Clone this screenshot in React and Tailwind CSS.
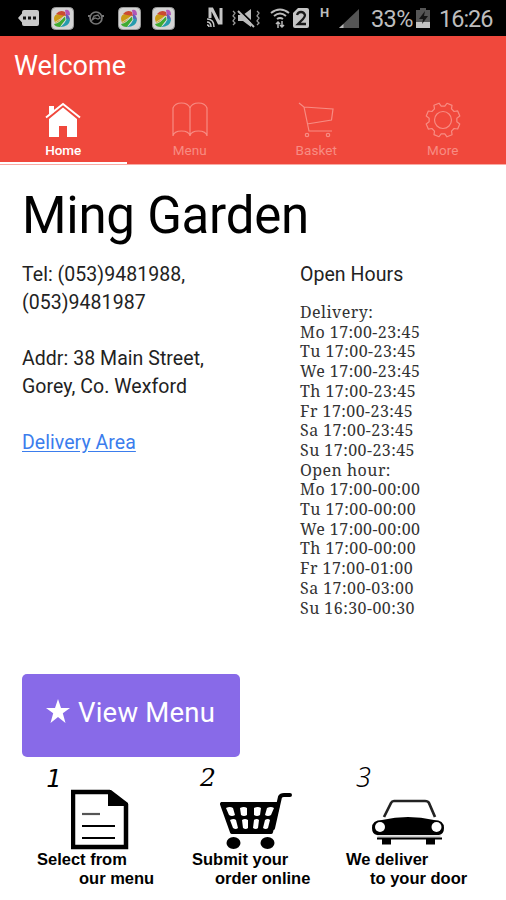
import React from 'react';

const hours = [
  'Delivery:', 'Mo 17:00-23:45', 'Tu 17:00-23:45', 'We 17:00-23:45', 'Th 17:00-23:45',
  'Fr 17:00-23:45', 'Sa 17:00-23:45', 'Su 17:00-23:45', 'Open hour:', 'Mo 17:00-00:00',
  'Tu 17:00-00:00', 'We 17:00-00:00', 'Th 17:00-00:00', 'Fr 17:00-01:00', 'Sa 17:00-03:00',
  'Su 16:30-00:30',
];

function MessageIcon() {
  return (
    <svg className="ml-[18px] h-[16px] w-[21px]" viewBox="0 0 21 16">
      <path d="M0 8 4 3.500V2Q4 0 6 0h13q2 0 2 2v12q0 2-2 2H6q-2 0-2-2v-1.500Z" fill="#c9c9c9" />
      <path d="M5 6.500h3v3H5zM10 6.500h3v3h-3zM15 6.500h3v3h-3z" fill="#111" />
    </svg>
  );
}

function GalleryIcon({ className }) {
  return (
    <svg className={`h-[23px] w-[23px] ${className}`} viewBox="0 0 23 23">
      <rect x=".5" y=".5" width="22" height="22" rx="4" fill="#d4d4d4" stroke="#999" />
      <path d="M3 12q0-5 5-5l6 1-7 7-3 1Z" fill="#ca9b16" />
      <path d="M5 7q4-5 9-2l1 4-6-1Z" fill="#cb4a33" />
      <path d="M14 3q5-1 5 5l-4 1Z" fill="#b155b6" />
      <path d="M15 7q4 2 4 6l-4-1Z" fill="#5a62ba" />
      <path d="M3 17q6-1 11-8l1 3-6 8q-5 0-6-3Z" fill="#3fab30" />
      <path d="M9 20q6-4 6-9l4 2q-1 7-10 7Z" fill="#259bad" />
      <path d="m3 16 11-7M14 9l1 4-5 6" stroke="#ddd" strokeWidth=".7" fill="none" />
    </svg>
  );
}

function StatusBar() {
  return (
    <div className="flex h-9 items-center overflow-hidden bg-black text-[#bdbdbd]">
      <MessageIcon />
      <GalleryIcon className="ml-[12px]" />
      <svg className="ml-[14px] h-[16px] w-[16px]" viewBox="0 0 16 16" fill="none" stroke="#757575">
        <circle cx="8" cy="8" r="6" strokeWidth="1.700" />
        <path d="m4 10 2-4 4-1 2 3-2 1-3-1Z" strokeWidth="1.300" />
        <path d="M0 6h2M14 6h2" strokeWidth="2" />
      </svg>
      <GalleryIcon className="ml-[14px]" />
      <GalleryIcon className="ml-[11px]" />
      <svg className="ml-[31px] h-[22px] w-[18px]" viewBox="0 0 18 22" fill="none" stroke="#c5c5c5">
        <path d="M4 11V2h2l7 14h2V1" strokeWidth="3" />
        <path d="M1 12q7 0 7 8M1 15q4 0 4 5M1 18q2 0 2 2" strokeWidth="1.500" />
      </svg>
      <svg className="ml-[8px] h-[20px] w-[28px]" viewBox="0 0 28 20">
        <path d="M6 7h5l8-6v18l-8-6H6Z" fill="#bbb" />
        <path d="m7 2 17 16" stroke="#000" strokeWidth="2" />
        <path d="m6 3 16 16" stroke="#bbb" strokeWidth="2" />
        <path d="m1 3 2 2-2 3 2 2-2 3 2 2-2 2M25 3l2 2-2 3 2 2-2 3 2 2-2 2" fill="none" stroke="#999" strokeWidth="1.300" />
      </svg>
      <svg className="ml-[10px] h-[21px] w-[20px]" viewBox="0 0 20 21" fill="none" stroke="#bbb">
        <path d="M1 5q9-7 18 0M4 8q6-5 12 0M7 11q3-2 6 0" strokeWidth="2" />
        <path d="M8 20v-6M6 16l2-2 2 2M12 13v6M10 17l2 2 2-2" strokeWidth="1.500" />
      </svg>
      <svg className="ml-[3px] h-[20px] w-[16px]" viewBox="0 0 16 20">
        <path d="M5 0h9q2 0 2 2v16q0 2-2 2H2q-2 0-2-2V5Z" fill="#c5c5c5" />
        <path d="M4 7q1-3 4-3t4 3q0 2-2 4l-5 5h8" fill="none" stroke="#181818" strokeWidth="2.300" />
      </svg>
      <span className="mb-[11px] ml-[11px] w-[10px] font-['Roboto',sans-serif] text-[13px] leading-[12px] font-bold">H</span>
      <svg className="ml-[9px] h-[19px] w-[20px]" viewBox="0 0 20 19">
        <path d="M20 0v19H0Z" fill="#555" />
        <path d="M4.500 15v4H0Z" fill="#bbb" />
      </svg>
      <span className="mt-[3px] ml-[12px] w-[42px] font-['Roboto',sans-serif] text-[23.500px] tracking-[-0.600px] whitespace-nowrap">33%</span>
      <svg className="ml-[3px] h-[20px] w-[14px]" viewBox="0 0 14 20">
        <path d="M4 0h6v2h4v18H0V2h4Z" fill="#555" />
        <path d="M0 14h14v6H0Z" fill="#c3c3c3" />
        <path d="m9 3-6 8h4l-1 5 6-8H8Z" fill="#151515" />
      </svg>
      <span className="mt-[3px] ml-[9px] font-['Roboto',sans-serif] text-[23.500px] tracking-[-1px]">16:26</span>
    </div>
  );
}

const tabIcons = {
  Home: (
    <g>
      <path d="M4 4h5v6l-5 4Z" fill="currentColor" stroke="none" />
      <path d="M1 15.500 18 2l17 13.500" strokeWidth="2" />
      <path d="M4 17 18 5.500 32 17v18H22V24h-8v11H4Z" fill="currentColor" stroke="none" />
    </g>
  ),
  Menu: <path d="M18 6v28M18 6Q16 1 9.500 1T1 6v28q1-5 8.500-5T18 34q1-5 8.500-5T35 34V6q-2-5-8.500-5T18 6Z" />,
  Basket: (
    <g>
      <path d="m1 1 5 4 5 24h23M6 5l29 2-1.500 11L9 22" />
      <circle cx="9" cy="33" r="1.700" />
      <circle cx="30" cy="33" r="1.700" />
    </g>
  ),
  More: (
    <g>
      <circle cx="18" cy="18" r="8.500" />
      <path transform="rotate(22.500 18 18)" d="M14.400 4.500 15.300 1h5.400l.9 3.500 3.400 1.400L28.100 4 32 7.900 30.100 11l1.400 3.400 3.500.9v5.400l-3.500.9-1.400 3.400 1.900 3.100-3.900 3.900-3.100-1.900-3.400 1.400-.9 3.500h-5.400l-.9-3.500L11 30.100 7.900 32 4 28.100 5.900 25l-1.400-3.400-3.500-.9v-5.400l3.500-.9L5.900 11 4 7.900 7.900 4 11 5.900Z" strokeLinejoin="round" />
    </g>
  ),
};

function Tab({ name, active }) {
  return (
    <div className={`flex flex-1 flex-col items-center border-b-2 pt-[6px] ${active ? 'border-white text-white' : 'border-[#f0483c] text-[#f78c83]'}`}>
      <svg className="h-[36px] w-[36px]" viewBox="0 0 36 36" fill="none" stroke="currentColor" strokeWidth="1.200">
        {tabIcons[name]}
      </svg>
      <span className={`mt-[3px] text-[13.500px] leading-[18px] ${active ? 'font-medium' : 'tracking-[0.100px]'}`}>{name}</span>
    </div>
  );
}

function DocumentIcon() {
  return (
    <svg className="mt-[29px] ml-[34px] h-[61px] w-[59px]" viewBox="0 0 59 61">
      <path d="M2 3h36l17 13v42H2Z" fill="#fff" stroke="#000" strokeWidth="4.500" />
      <path d="M37 1h3l17 13v3H37Z" />
      <path d="M11 25h18" stroke="#555" strokeWidth="2.200" />
      <path d="M11 37h33M11 49h33" stroke="#000" strokeWidth="2.200" />
    </svg>
  );
}

function CartIcon() {
  return (
    <svg className="mt-[32px] ml-[26px] h-[58px] w-[76px]" viewBox="0 0 76 58">
      <path d="M4 12h56L53 40H14Z" stroke="#000" strokeWidth="4" strokeLinejoin="round" />
      <path d="m55 36 7-31q1-2 4-2h6" fill="none" stroke="#000" strokeWidth="4" strokeLinecap="round" />
      <g fill="#fff">
        <path d="M8 16q4-2 7 0l2 7q-3 2-6 0ZM22 16q4-2 7 0v7q-3 2-6 0ZM36 16q4-2 7 0l-1 7q-3 2-6 0ZM49 16q4-2 7 0l-3 7q-3 2-6 0Z" />
        <path d="M12 28q4-2 6 0l2 8q-2 2-5 0ZM24 28q3-2 6 0v8q-2 2-5 0ZM36 28q3-2 5 0l-1 8q-2 2-5 0ZM47 28q3-2 5 0l-2 8q-2 2-5 0Z" />
      </g>
      <ellipse cx="15.500" cy="51" rx="7" ry="6" />
      <ellipse cx="49.500" cy="51" rx="7" ry="6" />
    </svg>
  );
}

function CarIcon() {
  return (
    <svg className="mt-[38px] ml-[25px] h-[52px] w-[74px]" viewBox="0 0 74 52">
      <path d="m13 19 7-14q1-2 3-2h31q3 0 4 2l6 14" fill="none" stroke="#222" strokeWidth="2.700" />
      <path d="M11 22q26-6 52 0 10 0 10 8 0 6-5 7H6q-5-1-5-7 0-8 10-8Z" />
      <circle cx="9" cy="29" r="5" fill="#fff" />
      <circle cx="65.500" cy="29" r="5" fill="#fff" />
      <path d="M6 37.500h64l-1 2H7Z" fill="#ccc" />
      <path d="M6 39.500h65v2H6ZM11 41h9v5.500H11ZM55 41h9v5.500H55Z" />
    </svg>
  );
}

function Step({ number, icon, first, second, className, numberClass, secondClass }) {
  return (
    <div className={`relative flex shrink-0 flex-col ${className}`}>
      <span className={`absolute leading-[36px] italic ${numberClass}`}>{number}</span>
      {icon}
      <div className="font-['Liberation_Sans',Arial,sans-serif] text-[16.500px] leading-[19px] font-bold whitespace-nowrap">
        <p>{first}</p>
        <p className={secondClass}>{second}</p>
      </div>
    </div>
  );
}

export default function App() {
  return (
    <div className="flex h-[900px] w-[506px] flex-col overflow-hidden bg-white font-['Roboto',sans-serif] text-black">
      <StatusBar />
      <header className="flex h-[129px] flex-col border-b border-[#f9aaa4] bg-[#f0483c]">
        <h1 className="h-[60px] pl-[14px] text-[27px] leading-[60px] text-white">Welcome</h1>
        <nav className="flex flex-1">
          <Tab name="Home" active />
          <Tab name="Menu" />
          <Tab name="Basket" />
          <Tab name="More" />
        </nav>
      </header>
      <main className="flex flex-col">
        <h2 className="mt-[21px] ml-[22px] h-[60px] text-[51px] leading-[60px] tracking-[-0.250px] whitespace-nowrap">Ming Garden</h2>
        <div className="mt-[15px] flex h-[413px] pl-[22px] text-[19.500px] leading-[28px] tracking-[0.050px] text-[#222]">
          <section className="w-[278px] whitespace-nowrap">
            <p>Tel: (053)9481988,<br />(053)9481987</p>
            <p className="mt-7">Addr: 38 Main Street,<br />Gorey, Co. Wexford</p>
            <a className="mt-7 block text-[#3b7ded] underline underline-offset-2">Delivery Area</a>
          </section>
          <section>
            <h3>Open Hours</h3>
            <div className="mt-[14px] font-['Noto_Serif','DejaVu_Serif_Condensed','DejaVu_Serif',serif] text-[16px] leading-[19.700px] tracking-[0.450px] whitespace-nowrap text-[#333]">
              {hours.map((line) => <p key={line}>{line}</p>)}
            </div>
          </section>
        </div>
        <button className="ml-[22px] flex h-[83px] w-[218px] rounded-[5px] bg-[#886ae8] pt-[22px] pl-[24px] text-white">
          <svg className="mt-[3px] h-[24px] w-[24px]" viewBox="0 0 24 24" fill="currentColor">
            <path d="m12 0 3 9h9l-7.200 5.300L19.500 24 12 18l-7.500 6 2.700-9.700L0 9h9Z" />
          </svg>
          <span className="ml-[8px] text-[27.500px] leading-[34px] tracking-[0.200px] whitespace-nowrap">View Menu</span>
        </button>
        <div className="mt-[3px] flex pl-[37px]">
          <Step number="1" icon={<DocumentIcon />} first="Select from" second="our menu" className="w-[155px]" numberClass="top-[1px] left-[9px] font-['DejaVu_Sans_Mono',monospace] text-[25px]" secondClass="pl-[42px]" />
          <Step number="2" icon={<CartIcon />} first="Submit your" second="order online" className="w-[154px]" numberClass="top-0 left-[8px] font-['DejaVu_Serif',serif] text-[25px]" secondClass="pl-[23px]" />
          <Step number="3" icon={<CarIcon />} first="We deliver" second="to your door" className="w-[150px]" numberClass="-top-[1px] left-[10px] font-['Noto_Sans',sans-serif] text-[27px] font-light" secondClass="pl-[24px]" />
        </div>
      </main>
    </div>
  );
}
